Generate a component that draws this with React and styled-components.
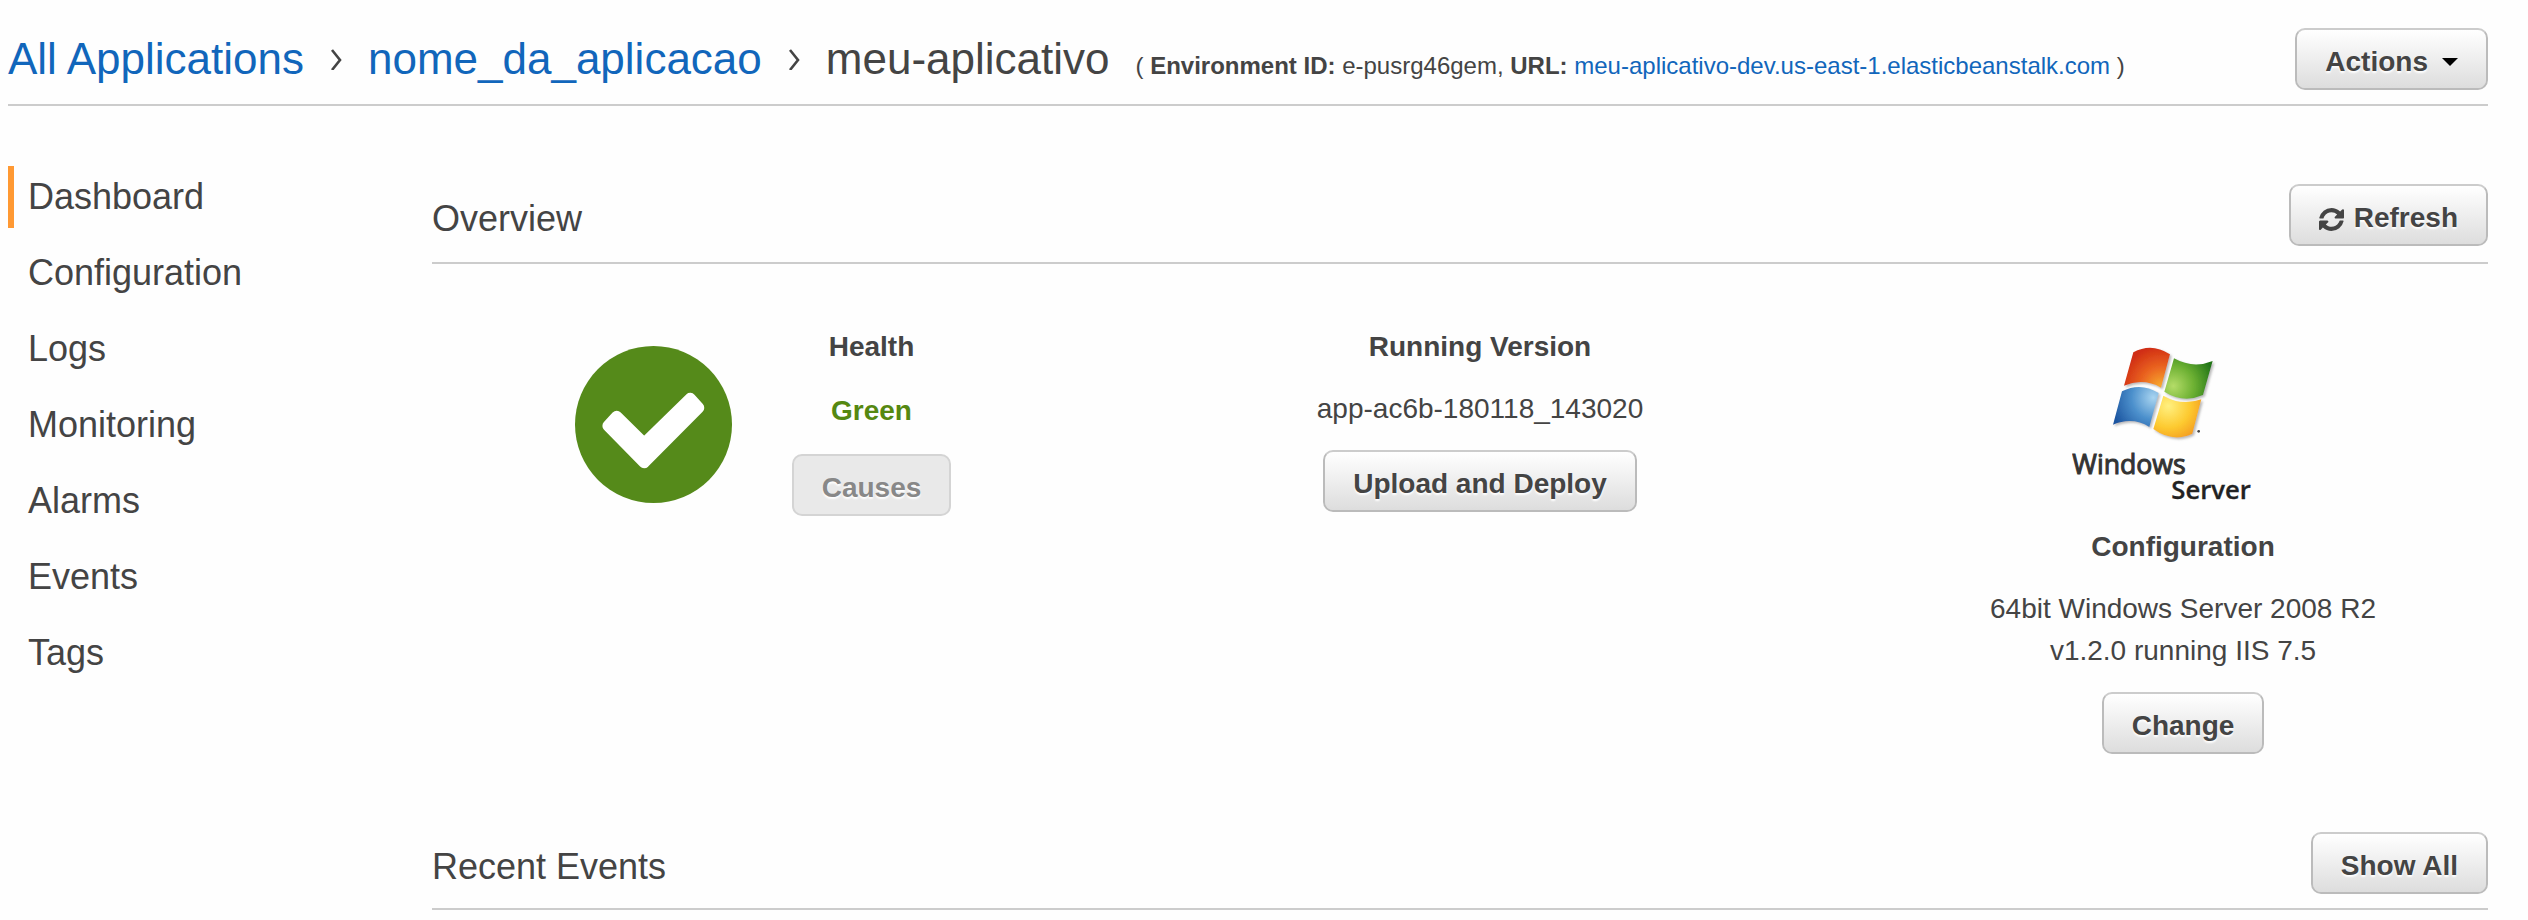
import React from "react";
import styled, { createGlobalStyle } from "styled-components";

const GlobalStyle = createGlobalStyle`
  * { box-sizing: border-box; }
  body {
    margin: 0;
    background: #fefefe;
    color: #444;
    font-family: "Liberation Sans", Arial, sans-serif;
    font-size: 28px;
    line-height: 42px;
  }
  h1, h2, h3, p, ul, ol { margin: 0; padding: 0; }
  ul, ol { list-style: none; }
`;

const Page = styled.div`
  padding: 0 40px 0 8px;
`;

const Header = styled.header`
  display: flex;
  justify-content: space-between;
  align-items: flex-start;
  padding: 28px 0 14px;
  border-bottom: 2px solid #ccc;
`;

const Heading = styled.div`
  display: flex;
  align-items: baseline;
  gap: 26px;
  line-height: 62px;
`;

const Crumbs = styled.ol`
  display: flex;
  align-items: center;
  gap: 26px;
  font-size: 44px;
`;

const Crumb = styled.li`
  display: flex;
  align-items: center;
  gap: 26px;
`;

const Link = styled.a`
  color: #16b;
  text-decoration: none;
`;

const Title = styled.h1`
  font-size: 44px;
  font-weight: 400;
`;

const EnvInfo = styled.p`
  font-size: 24px;
  line-height: 42px;
`;

const Button = styled.button`
  display: inline-flex;
  align-items: center;
  gap: 10px;
  height: 62px;
  padding: 6px 28px 0;
  border: 2px solid #bbb;
  border-top-color: #ccc;
  border-radius: 10px;
  background: linear-gradient(#fff, #ddd);
  background-clip: padding-box;
  color: #444;
  font: bold 28px/52px "Liberation Sans", Arial, sans-serif;
  text-shadow: 0 2px 2px #fff;
  white-space: nowrap;
  cursor: pointer;

  &:disabled {
    border-color: #d4d4d4;
    background: #e9e9e9;
    color: #888;
    cursor: default;
  }
`;

const Caret = styled.span`
  margin-left: 4px;
  border: 8px solid transparent;
  border-top-color: #000;
  border-bottom: 0;
`;

const Body = styled.div`
  display: grid;
  grid-template-columns: 424px 1fr;
  padding-top: 60px;
`;

const NavList = styled.ul`
  display: flex;
  flex-direction: column;
  gap: 14px;
`;

const NavLink = styled.a`
  display: block;
  padding-left: 14px;
  border-left: 6px solid ${(p) => (p.$active ? "#f93" : "transparent")};
  color: #444;
  font-size: 36px;
  line-height: 62px;
  text-decoration: none;
`;

const Main = styled.main`
  display: flex;
  flex-direction: column;
  gap: 78px;
  padding-top: 18px;
`;

const SectionHeader = styled.div`
  display: flex;
  justify-content: space-between;
  align-items: flex-start;
  padding-bottom: ${(p) => (p.$tight ? 10 : 12)}px;
  border-bottom: 2px solid #ccc;
`;

const SectionTitle = styled.h2`
  padding-top: 4px;
  font-size: 36px;
  font-weight: 400;
  line-height: 62px;
`;

const Panels = styled.div`
  display: grid;
  grid-template-columns: 650fr 796fr 610fr;
  padding-top: 62px;
`;

const HealthPanel = styled.div`
  display: flex;
  justify-content: center;
  align-items: flex-start;
  gap: 60px;
  padding-left: 12px;
`;

const Panel = styled.div`
  display: flex;
  flex-direction: column;
  align-items: center;
  gap: ${(p) => p.$gap || 20}px;
  text-align: center;
`;

const LogoPanel = styled(Panel)`
  padding-top: 20px;
`;

const PanelTitle = styled.h3`
  font-size: 28px;
`;

const Status = styled.strong`
  color: #581;
`;

const HealthMark = styled.svg`
  width: 157px;
  height: 157px;
  margin-top: 20px;
`;

const LogoArt = styled.svg`
  width: 222px;
  height: 160px;
  font-family: "Open Sans", "Noto Sans", sans-serif;
`;

function Chevron() {
  return (
    <svg width="12" height="22" viewBox="0 0 12 22" fill="none" stroke="#444" strokeWidth="2.6" aria-hidden="true">
      <path d="M2 2 L10 12 L2 22" />
    </svg>
  );
}

function RefreshIcon() {
  return (
    <svg width="25" height="25" viewBox="0 0 1536 1536" fill="#444" aria-hidden="true">
      <path d="M1511 928q0 5-1 7-64 268-268 434.500t-478 166.500q-146 0-282.500-55t-243.500-157l-129 129q-19 19-45 19t-45-19-19-45v-448q0-26 19-45t45-19h448q26 0 45 19t19 45-19 45l-137 137q71 66 161 102t187 36q134 0 250-65t186-179q11-17 53-117 8-23 30-23h192q13 0 22.500 9.500t9.500 22.500z" />
      <path d="M1536 256v448q0 26-19 45t-45 19h-448q-26 0-45-19t-19-45 19-45l138-138q-148-137-349-137-134 0-250 65t-186 179q-11 17-53 117-8 23-30 23h-199q-13 0-22.500-9.500t-9.500-22.500v-7q65-268 270-434.500t480-166.500q146 0 284 55.500t245 156.500l130-129q19-19 45-19t45 19 19 45z" />
    </svg>
  );
}

function HealthIcon() {
  return (
    <HealthMark viewBox="105 105 470 470" role="img" aria-label="Healthy">
      <circle cx="340" cy="340" r="235" fill="#558a1a" />
      <path
        d="M230 316 L204 344 L312 454 L475 290 L450 262 L312 397 Z"
        fill="#fff"
        stroke="#fff"
        strokeWidth="34"
        strokeLinejoin="round"
      />
    </HealthMark>
  );
}

function WindowsServerLogo() {
  return (
    <LogoArt viewBox="96 45 666 480" role="img" aria-label="Windows Server">
      <defs>
        <radialGradient id="red" gradientUnits="userSpaceOnUse" cx="365" cy="170" r="125">
          <stop offset="0" stopColor="#f8b030" />
          <stop offset="0.5" stopColor="#ea6420" />
          <stop offset="1" stopColor="#d02d14" />
        </radialGradient>
        <radialGradient id="green" gradientUnits="userSpaceOnUse" cx="400" cy="165" r="125">
          <stop offset="0" stopColor="#b4dc68" />
          <stop offset="0.5" stopColor="#6cb032" />
          <stop offset="1" stopColor="#237618" />
        </radialGradient>
        <radialGradient id="blue" gradientUnits="userSpaceOnUse" cx="340" cy="200" r="130">
          <stop offset="0" stopColor="#a8d4f0" />
          <stop offset="0.5" stopColor="#4c90cc" />
          <stop offset="1" stopColor="#1c55a0" />
        </radialGradient>
        <radialGradient id="yellow" gradientUnits="userSpaceOnUse" cx="385" cy="225" r="130">
          <stop offset="0" stopColor="#fff080" />
          <stop offset="0.5" stopColor="#fdca30" />
          <stop offset="1" stopColor="#f08a1c" />
        </radialGradient>
        <filter id="shade" x="-10%" y="-10%" width="120%" height="120%">
          <feDropShadow dx="5" dy="5" stdDeviation="3" floodColor="#888" floodOpacity="0.6" />
        </filter>
      </defs>
      <g filter="url(#shade)">
        <path d="M280 64 Q335 34 390 70 L363 170 Q310 140 252 164 Z" fill="url(#red)" />
        <path d="M402 82 Q460 114 518 90 L489 192 Q430 218 373 182 Z" fill="url(#green)" />
        <path d="M246 181 Q302 152 356 186 L328 288 Q278 256 219 281 Z" fill="url(#blue)" />
        <path d="M370 194 Q425 226 484 205 L457 308 Q398 336 340 294 Z" fill="url(#yellow)" />
      </g>
      <circle cx="476" cy="301" r="4" fill="#444" />
      <text x="97" y="430" fontSize="80" fill="#333" stroke="#333" strokeWidth="3">Windows</text>
      <text x="394" y="503" fontSize="77" fontWeight="600" fill="#222" stroke="#222" strokeWidth="1">Server</text>
    </LogoArt>
  );
}

const navItems = ["Dashboard", "Configuration", "Logs", "Monitoring", "Alarms", "Events", "Tags"];

export default function App() {
  return (
    <>
      <GlobalStyle />
      <Page>
        <Header>
          <Heading>
            <Crumbs>
              <Crumb>
                <Link href="#applications">All Applications</Link>
                <Chevron />
              </Crumb>
              <Crumb>
                <Link href="#nome_da_aplicacao">nome_da_aplicacao</Link>
                <Chevron />
              </Crumb>
              <Crumb>
                <Title>meu-aplicativo</Title>
              </Crumb>
            </Crumbs>
            <EnvInfo>
              ( <strong>Environment ID:</strong> e-pusrg46gem, <strong>URL:</strong>{" "}
              <Link href="#environment">meu-aplicativo-dev.us-east-1.elasticbeanstalk.com</Link> )
            </EnvInfo>
          </Heading>
          <Button type="button" aria-haspopup="menu">
            Actions
            <Caret />
          </Button>
        </Header>
        <Body>
          <nav aria-label="Environment">
            <NavList>
              {navItems.map((item, i) => (
                <li key={item}>
                  <NavLink href={`#${item.toLowerCase()}`} $active={i === 0}>
                    {item}
                  </NavLink>
                </li>
              ))}
            </NavList>
          </nav>
          <Main>
            <section>
              <SectionHeader>
                <SectionTitle>Overview</SectionTitle>
                <Button type="button">
                  <RefreshIcon />
                  Refresh
                </Button>
              </SectionHeader>
              <Panels>
                <HealthPanel>
                  <HealthIcon />
                  <Panel $gap={22}>
                    <PanelTitle>Health</PanelTitle>
                    <Status>Green</Status>
                    <Button type="button" disabled>
                      Causes
                    </Button>
                  </Panel>
                </HealthPanel>
                <Panel>
                  <PanelTitle>Running Version</PanelTitle>
                  <p>app-ac6b-180118_143020</p>
                  <Button type="button">Upload and Deploy</Button>
                </Panel>
                <LogoPanel>
                  <WindowsServerLogo />
                  <PanelTitle>Configuration</PanelTitle>
                  <p>
                    64bit Windows Server 2008 R2
                    <br />
                    v1.2.0 running IIS 7.5
                  </p>
                  <Button type="button">Change</Button>
                </LogoPanel>
              </Panels>
            </section>
            <section>
              <SectionHeader $tight>
                <SectionTitle>Recent Events</SectionTitle>
                <Button type="button">Show All</Button>
              </SectionHeader>
            </section>
          </Main>
        </Body>
      </Page>
    </>
  );
}
